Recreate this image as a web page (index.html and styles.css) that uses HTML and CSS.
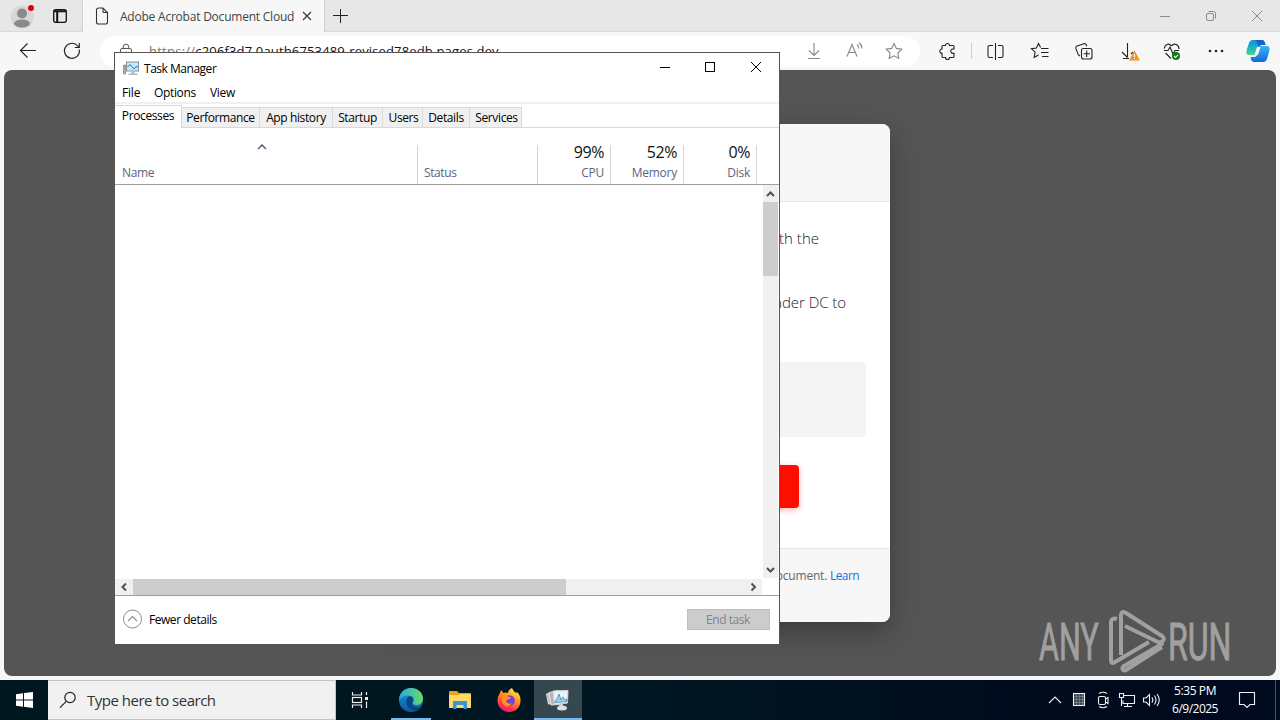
FILE: index.html
```html
<!DOCTYPE html>
<html lang="en">
<head>
  <meta charset="UTF-8" />
  <meta name="viewport" content="width=device-width, initial-scale=1.0" />
  <title>Desktop</title>
  <link rel="stylesheet" href="styles.css">
</head>
<body>

<div class="desktop">
  <!-- Browser -->
  <div class="browser">
    <div class="tabstrip">
      <svg class="profile" width="36" height="30" viewBox="0 0 36 30">
        <circle cx="18" cy="16" r="11.5" fill="#d9d7d5"/>
        <circle cx="18" cy="12.500" r="5" fill="#8c8a88"/>
        <ellipse cx="18" cy="22.500" rx="8" ry="4" fill="#8c8a88"/>
        <circle cx="27" cy="7" r="3" fill="#e1000f"/>
      </svg>
      <svg class="workspaces" width="16" height="16" viewBox="0 0 16 16" fill="none" stroke="#111">
        <rect x="1.700" y="1.700" width="12.600" height="12.600" rx="2" stroke-width="1.300"/>
        <path d="M2 3.200h12M5.200 4v10" stroke-width="2"/>
      </svg>
      <div class="tab">
        <svg width="14" height="18" viewBox="0 0 14 18" fill="none" stroke="#333" stroke-width="1.100">
          <path d="M1.500 3a2 2 0 0 1 2-2H8l4.500 4.500V15a2 2 0 0 1-2 2h-7a2 2 0 0 1-2-2zM8 1v3.500a1 1 0 0 0 1 1h3.500"/>
        </svg>
        <span class="tab-title">Adobe Acrobat Document Cloud</span>
        <svg width="10" height="10" viewBox="0 0 10 10" stroke="#333" stroke-width="1.100"><path d="M1 1l8 8M9 1l-8 8"/></svg>
      </div>
      <svg class="new-tab" width="15" height="14" viewBox="0 0 15 14" stroke="#222"><path d="M0 6.500h15M7.500 0v14"/></svg>
      <div class="win-buttons">
        <svg width="46" height="32" viewBox="0 0 46 32" stroke="#8a8a8a"><path d="M18 16.500h10"/></svg>
        <svg width="46" height="32" viewBox="0 0 46 32" stroke="#8a8a8a" fill="none"><rect x="18.500" y="13.500" width="7" height="7" rx="1.500"/><path d="M20.500 11.500h5a2 2 0 0 1 2 2v5"/></svg>
        <svg width="46" height="32" viewBox="0 0 46 32" stroke="#8a8a8a"><path d="M18 11l10 10M28 11l-10 10"/></svg>
      </div>
    </div>

    <div class="toolbar">
      <svg class="tool" viewBox="0 0 44 38"><path d="M30 18.500H15M21.500 11.500l-7 7 7 7"/></svg>
      <svg class="tool" viewBox="0 0 44 38"><path d="M29.300 17.500a7.500 7.500 0 1 1-2.200-4.100l2 1.800M29.300 11v4.500h-4.500"/></svg>
      <div class="address">
        <svg class="lock" width="14" height="16" viewBox="0 0 14 16" fill="none" stroke="#555"><rect x="1.500" y="5.500" width="11" height="9" rx="1.500"/><path d="M4.200 5.500V4a2.800 2.800 0 0 1 5.600 0v1.500M6.500 9h1"/></svg>
        <span class="url"><span class="scheme">https://</span>c206f3d7.0auth6753489-revised78edb.pages.dev</span>
        <svg class="pill-icon" viewBox="0 0 40 32"><path d="M20 8v12M15 15.500l5 5 5-5M14 23.500h12"/></svg>
        <svg class="pill-icon" viewBox="0 0 40 32"><path d="M13 21.500l5-12 5 12M14.700 17.500h6.600M23 9.500a5 5 0 0 1 1.500 4M25 7.500a8 8 0 0 1 3 6"/></svg>
        <svg class="pill-icon" viewBox="0 0 40 32"><path d="M20 8.500l2.400 4.900 5.400.8-3.900 3.800.9 5.300-4.800-2.500-4.800 2.500.9-5.300-3.900-3.800 5.400-.8z"/></svg>
      </div>
      <svg class="tool extensions" viewBox="0 0 44 38"><path d="M17 13.500h2.500a2 2 0 1 1 4 0H27a1 1 0 0 1 1 1V17h-1a2.200 2.200 0 1 0 0 4.400h1v3.100a1 1 0 0 1-1 1h-3.500a2 2 0 1 1-4 0H17a1 1 0 0 1-1-1v-3.100a2.200 2.200 0 1 1 0-4.400v-2.500a1 1 0 0 1 1-1z"/></svg>
      <div class="tool-sep"></div>
      <svg class="tool" viewBox="0 0 44 38"><path d="M19 13.500h-3.500a1.500 1.500 0 0 0-1.500 1.500v9a1.500 1.500 0 0 0 1.500 1.500H19M24 13.500h3.500a1.500 1.500 0 0 1 1.500 1.500v9a1.500 1.500 0 0 1-1.500 1.500H24M21.500 11v17"/></svg>
      <svg class="tool" viewBox="0 0 44 38"><path d="M22.600 15.500L20.500 11.500 18.400 16l-5 .7 3.700 3.500-.9 5.300 4.300-2.500M23 16.500h7.500M23 20.500h7.500M24 24.500h6.500"/></svg>
      <svg class="tool" viewBox="0 0 44 38"><rect x="19.500" y="16.500" width="10.500" height="10.500" rx="2"/><path d="M24.700 18.500v6.500M21.500 21.700h6.500M18 24l-1.600-1.100-2.600-6.500a2 2 0 0 1 1.200-2.400l7-2.300a2 2 0 0 1 2.300 1.100l.5 1.400"/></svg>
      <svg class="tool" viewBox="0 0 44 38"><path d="M21.500 11v14M16 20l5.500 5.500M27 20l-2 2M17 26.500h6"/><path d="M28.500 19.500l4.500 8.500H24z" fill="#f7941d" stroke="#f7941d"/><path d="M28.500 22v3m0 1v1" stroke="#fff"/></svg>
      <svg class="tool" viewBox="0 0 44 38"><path d="M21.500 14c-2.500-3.500-7-1.500-7 2.500M21.500 14c2.500-3.500 7.500-1.500 7.500 3M14 18.500h4l2-3.500 3 7 2-3.500h4M15.500 21l5.500 5.500"/><circle cx="26" cy="24" r="4" fill="#107c10" stroke="none"/><path d="M24 24l1.500 1.500 2.500-2.700" stroke="#fff"/></svg>
      <svg class="tool" viewBox="0 0 44 38"><g fill="#222" stroke="none"><circle cx="16" cy="19" r="1.300"/><circle cx="22" cy="19" r="1.300"/><circle cx="28" cy="19" r="1.300"/></g></svg>
      <svg class="copilot" width="26" height="24" viewBox="0 0 26 24">
        <defs>
          <linearGradient id="cpA" x1="0" y1="0" x2="0" y2="1"><stop offset="0" stop-color="#1487e8"/><stop offset=".45" stop-color="#12b5c4"/><stop offset="1" stop-color="#4fd18b"/></linearGradient>
          <linearGradient id="cpB" x1="0" y1="0" x2="0" y2="1"><stop offset="0" stop-color="#38b6f2"/><stop offset="1" stop-color="#1268dc"/></linearGradient>
        </defs>
        <path d="M8 1h9c2 0 3 2 3.500 5h-4c-2.500 0-3.500 2-4.500 6l-1 4H4c-3 0-3-3-2-6L4 4q1-3 4-3z" fill="url(#cpA)"/>
        <path d="M10 1h7c2 0 3 2 3.500 5h-4q-2 0-3 3-1-6-3.500-8z" fill="#1664c8"/>
        <path d="M18 23H9c-2 0-3-2-3.500-5h3.500c2.500 0 3.500-2 4.500-6l1.500-5h7c3 0 3 3 2 6l-2 7q-1 3-4 3z" fill="url(#cpB)"/>
        <path d="M12 8h3.500l-2.500 8H9.500z" fill="#f7f7f7"/>
      </svg>
    </div>

    <div class="page">
      <div class="card">
        <div class="card-head"></div>
        <div class="card-body">
          <p class="line-one">with the</p>
          <p class="line-two">Reader DC to</p>
          <div class="file-box"></div>
          <div class="red-btn"></div>
        </div>
        <div class="card-foot"><span>document.</span> <a>Learn</a></div>
      </div>
      <svg class="watermark" width="204" height="70" viewBox="0 0 204 70">
        <g font-family="Roboto, sans-serif" font-size="51" fill="#a9a9a9" stroke="#a9a9a9" stroke-width=".9">
          <text transform="translate(3 55) scale(.6 1)">ANY</text>
          <text transform="translate(132 55) scale(.63 1)">RUN</text>
        </g>
        <g transform="translate(1 4)" fill="none" stroke="#a9a9a9" stroke-width="4" stroke-linejoin="round">
          <path d="M80 10c-3-1-6 0-6 3v38c0 3 1 4 4 2l34-20"/>
          <path d="M84 46V7c0-4 2-5 5-3l36 23c3 2 2 5-1 6l-2 1"/>
          <path d="M88 17l37 18-38 22c-3 2-1 6 2 4l36-23"/>
        </g>
      </svg>
    </div>
  </div>

  <!-- Taskbar -->
  <div class="taskbar">
    <div class="start">
      <svg width="17" height="16" viewBox="0 0 17 16" fill="#fff"><path d="M0 2.300L7 1.300V7.500H0zM8 1.100L17 0v7.500H8zM0 8.500h7v6.200L0 13.700zM8 8.500h9V16L8 14.800z"/></svg>
    </div>
    <div class="search">
      <svg width="18" height="18" viewBox="0 0 18 18" fill="none" stroke="#222" stroke-width="1.200"><circle cx="11" cy="6.500" r="5.200"/><path d="M7.300 10.300L1 16.700"/></svg>
      <span>Type here to search</span>
    </div>
    <div class="task-view">
      <svg width="17" height="16" viewBox="0 0 17 16" fill="none" stroke="#eee" stroke-width="1.200"><path d="M1.500 0v3h9V0M1.500 16v-3h9v3M15.500 0v3M15.500 9.500V16"/><rect x="1.500" y="5.500" width="9" height="5"/><path d="M14 6.500h3" stroke-width="3"/></svg>
    </div>
    <div class="app running">
      <svg width="26" height="26" viewBox="0 0 26 26">
        <defs>
          <linearGradient id="edA" x1="0" y1="0" x2="1" y2="0"><stop offset="0" stop-color="#2aa8e8"/><stop offset="1" stop-color="#66dc62"/></linearGradient>
          <linearGradient id="edB" x1="0" y1="0" x2="0" y2="1"><stop offset="0" stop-color="#1b9de2"/><stop offset="1" stop-color="#0c59a4"/></linearGradient>
        </defs>
        <circle cx="13" cy="13" r="12" fill="url(#edB)"/>
        <path d="M1.200 11C2.500 4.500 7.500 1 13 1c8 0 12 6 12 10.500 0 4-3 6.500-6.500 6.500-4 0-4-2-3-3.200C17 12 15 8.500 10.500 8.500 6 8.500 2 10 1.200 14z" fill="url(#edA)"/>
        <path d="M10 10c-3 3-2.500 10 4 13 4 1.500 8-1 9.500-3.700-3 1.700-9 1-9.500-3-.2-1.500.7-2 1-3 .3-2.500-2-5.300-5-3.300z" fill="#10447f"/>
      </svg>
    </div>
    <div class="app">
      <svg width="22" height="20" viewBox="0 0 22 20"><path d="M0 2q0-1 1-1h7l2 2h11q1 0 1 1v14H0z" fill="#e8a317"/><path d="M0 5h9l2-1h11v14H0z" fill="#ffd867"/><path d="M4 19v-7q0-1 1-1h12q1 0 1 1v7h-3.500v-4h-7v4z" fill="#3a94cf"/></svg>
    </div>
    <div class="app">
      <svg width="24" height="24" viewBox="0 0 24 24">
        <defs><linearGradient id="fx" x1=".8" y1="0" x2=".3" y2="1"><stop offset="0" stop-color="#fff04a"/><stop offset=".4" stop-color="#ff9a1e"/><stop offset=".75" stop-color="#ff4047"/><stop offset="1" stop-color="#e9127b"/></linearGradient></defs>
        <path d="M3 5l1-3 2.500 3Q9 4 11 5q0-3 4-5 1 3 4 5l1-1q4 4 3.500 9.500C23 20 18 24 12 24S.500 19 .5 13Q.5 8 3 5z" fill="url(#fx)"/>
        <circle cx="12.500" cy="12.500" r="5.300" fill="#7540d6"/><path d="M5 8q4-2 7 1l2 .5q-1 2-3.500 2-2 1-.5 3 2 2 5 .5-2 4-6.500 3Q4 15 5 8z" fill="#ff9124"/>
      </svg>
    </div>
    <div class="app running active">
      <svg width="26" height="24" viewBox="0 0 26 24"><path d="M1.500 6l9-2v11l-7 1z" fill="#bdbdbd" stroke="#e5e5e5"/><path d="M4 4.500l10-2v14l-8 .5z" fill="#b5b5b5" stroke="#e5e5e5"/><path d="M8 3l15-.5-.5 12.500-13 1.500z" fill="#e8f2f7" stroke="#d4d4d4"/><path d="M10 13l2-2 2-5 2 6 2-3 2 3 2-1v2.500l-12 1z" fill="#9fd0ec" stroke="#3d8fc2" stroke-width=".8"/><path d="M14 16h4v3h-4z" fill="#c9c9c9"/><ellipse cx="17" cy="20" rx="5" ry="2.500" fill="#ddd"/></svg>
    </div>
    <div class="tray">
      <svg viewBox="0 0 24 40"><path d="M6 23l6-6 6 6"/></svg>
      <svg viewBox="0 0 24 40"><rect x="6.500" y="13.500" width="11" height="12" fill="#3b4550"/><path d="M9.500 14v11M12.500 14v11M15.500 14v11M7 16.500h10M7 19.500h10M7 22.500h10" stroke="#7d858c" stroke-width=".7"/></svg>
      <svg viewBox="0 0 24 40"><rect x="7.500" y="16.500" width="7" height="8" rx="1.500"/><path d="M14.500 19l2.500-1.500v6L14.500 22M8 13.500q4-2.500 8 0M8 26.500q4 2.500 8 0"/></svg>
      <svg viewBox="0 0 24 40"><path d="M9 15.500h10.500v8H8v-3M12.500 23.500v3M9 26.500h8M4.500 13.500h4v4h-4zM6.500 17.500v8.500"/></svg>
      <svg viewBox="0 0 24 40"><path d="M4.500 18h2.500l3.500-3.500v11L7 22H4.500zM13 17.500q1.700 2.500 0 5M15.500 15.500q3 4.500 0 9M18 14q4.500 6 0 12"/></svg>
      <div class="clock"><div>5:35 PM</div><div class="date">6/9/2025</div></div>
      <svg class="notify" viewBox="0 0 40 40"><path d="M12.500 12.500h15v12h-4.500l-3 3-3-3h-4.500z"/></svg>
      <div class="show-desktop"></div>
    </div>
  </div>

  <!-- Task Manager window -->
  <div class="taskmgr">
    <div class="tm-title">
      <svg width="16" height="16" viewBox="0 0 16 16"><path d="M.5 5h2v9h-2z" fill="#aaa" stroke="#777" stroke-width=".6"/><rect x="3.500" y="2" width="12" height="9" fill="#c5e9fa" stroke="#8a9299"/><path d="M4.500 7l2.500-2.500 4 4.500 2-2.500 2 .5" fill="none" stroke="#1877b8"/><path d="M8.500 11.500h3v2h-3zM5.500 13.500h9v1.500h-9z" fill="#b7b9bb"/></svg>
      <span class="tm-name">Task Manager</span>
      <svg width="46" height="30" viewBox="0 0 46 30" stroke="#000"><path d="M18 14.500h10"/></svg>
      <svg width="45" height="30" viewBox="0 0 45 30" stroke="#000" fill="none"><rect x="17.500" y="9.500" width="9" height="9"/></svg>
      <svg width="46" height="30" viewBox="0 0 46 30" stroke="#000"><path d="M18 9l10 10M28 9l-10 10"/></svg>
    </div>
    <div class="tm-menu"><span class="m-file">File</span><span class="m-options">Options</span><span class="m-view">View</span></div>
    <div class="tm-tabs">
      <div class="tm-tab selected">Processes</div>
      <div class="tm-tab t-perf">Performance</div>
      <div class="tm-tab t-hist">App history</div>
      <div class="tm-tab t-start">Startup</div>
      <div class="tm-tab t-users">Users</div>
      <div class="tm-tab t-details">Details</div>
      <div class="tm-tab t-serv">Services</div>
    </div>
    <div class="tm-head">
      <div class="col name"><svg width="10" height="6" viewBox="0 0 10 6" fill="none" stroke="#44546f" stroke-width="1.300"><path d="M1 5l4-4 4 4"/></svg><span>Name</span></div>
      <div class="col status"><span>Status</span></div>
      <div class="col num"><b>99%</b><span>CPU</span></div>
      <div class="col num"><b>52%</b><span>Memory</span></div>
      <div class="col num"><b>0%</b><span>Disk</span></div>
    </div>
    <div class="tm-list">
      <div class="v-scroll">
        <svg width="15" height="17" viewBox="0 0 15 17"><path d="M4 11l3.500-3.500L11 11"/></svg>
        <div class="v-thumb"></div>
        <svg class="end" width="15" height="17" viewBox="0 0 15 17"><path d="M4 7l3.500 3.500L11 7"/></svg>
      </div>
    </div>
    <div class="h-scroll">
      <svg width="18" height="16" viewBox="0 0 18 16"><path d="M11 4.500L7.500 8l3.500 3.500"/></svg>
      <div class="h-thumb"></div>
      <svg class="end" width="17" height="16" viewBox="0 0 17 16"><path d="M6.500 4.500L10 8l-3.500 3.500"/></svg>
    </div>
    <div class="tm-foot">
      <svg width="20" height="20" viewBox="0 0 20 20" fill="none" stroke="#8e8e8e"><circle cx="10.500" cy="10" r="9"/><path d="M6 12l4.500-4.500L15 12" stroke-width="1.200"/></svg>
      <span class="fewer">Fewer details</span>
      <div class="end-task">End task</div>
    </div>
  </div>
</div>

</body>
</html>
```
FILE: styles.css
```css
* { box-sizing: border-box; }
body { margin: 0; font-family: "Open Sans", "Noto Sans", sans-serif; font-size: 12px; color: #000; overflow: hidden; }
svg { display: block; flex: none; }
.desktop { position: relative; width: 1280px; height: 720px; overflow: hidden; display: flex; flex-direction: column; }

/* browser */
.browser { height: 680px; background: #f7f7f8; display: flex; flex-direction: column; }
.tabstrip { height: 32px; background: #e7e7e7; display: flex; align-items: center; border-bottom: 1px solid #dadada; }
.profile { margin-left: 4px; }
.workspaces { margin-left: 12px; }
.tab { width: 241px; height: 32px; margin-left: 15px; margin-bottom: -1px; padding: 0 12px 0 12px; background: #f7f7f7; display: flex; align-items: center; box-shadow: 0 0 2px #aaa; clip-path: inset(0 -3px 0 -3px); }
.tab-title { flex: 1; margin-left: 11px; font-size: 12px; letter-spacing: -0.22px; color: #444; white-space: nowrap; }
.new-tab { margin-left: 9px; }
.win-buttons { margin-left: auto; display: flex; }
.toolbar { height: 38px; padding-left: 6px; display: flex; align-items: center; }
.tool { width: 44px; height: 38px; fill: none; stroke: #222; stroke-width: 1.1; }
.tool-sep { width: 1px; height: 16px; margin: 0 2px 0 1px; background: #ccc; }
.extensions { margin-left: 6px; }
.copilot { margin-left: 7px; }
.address { width: 820px; height: 31px; margin-left: 6px; padding: 0 6px 0 19px; border-radius: 16px; background: #fff; display: flex; align-items: center; }
.url { flex: 1; margin-left: 16px; font-size: 13px; letter-spacing: 0.15px; color: #111; white-space: nowrap; }
.scheme { color: #777; letter-spacing: 0.25px; }
.pill-icon { width: 40px; height: 32px; fill: none; stroke: #888; stroke-width: 1.1; }
.page { position: relative; height: 606px; margin: 0 4px; background: #555; border-radius: 8px; display: flex; justify-content: center; align-items: flex-start; overflow: hidden; }

/* dialog on the page */
.card { width: 500px; height: 498px; margin-top: 54px; border-radius: 8px; background: #fff; overflow: hidden; box-shadow: 0 10px 30px rgba(0,0,0,0.3); display: flex; flex-direction: column; text-align: right; }
.card-head { height: 78px; background: #f7f7f7; border-bottom: 1px solid #e6e6e6; }
.card-body { flex: 1; padding: 24px 24px 0; }
.card-body p { margin: 0; font-size: 15px; line-height: 24px; color: #222; font-weight: 300; }
.card-body .line-one { padding-right: 47px; }
.card-body .line-two { padding-right: 20px; margin-top: 40px; letter-spacing: -0.05px; }
.file-box { height: 75px; margin-top: 48px; border-radius: 4px; background: #f4f4f4; }
.red-btn { width: 318px; height: 43px; margin: 28px auto 0; border-radius: 4px; background: #fa0f00; box-shadow: 0 2px 6px rgba(250,15,0,0.3); }
.card-foot { height: 74px; padding: 18px 31px 0 0; border-top: 1px solid #e6e6e6; background: #f7f7f7; font-size: 12px; line-height: 18px; letter-spacing: -0.2px; color: #666; }
.card-foot a { color: #1473e6; letter-spacing: -0.6px; }
.watermark { position: absolute; right: 36px; bottom: 1px; opacity: 0.9; }

/* taskbar */
.taskbar { height: 40px; background: linear-gradient(90deg, #00171f, #001722 48%, #000a1c 85%, #000a20); display: flex; }
.start { width: 48px; display: flex; align-items: center; justify-content: center; }
.search { width: 288px; padding-left: 11px; background: #f1f1f1; border: 1px solid #c5c5c5; border-left: 0; display: flex; align-items: center; gap: 10px; font-size: 15px; letter-spacing: -0.5px; color: #333; }
.task-view { width: 50px; padding-left: 15px; display: flex; align-items: center; }
.app { width: 49px; display: flex; align-items: center; justify-content: center; }
.running { background: linear-gradient(#76b9ed, #76b9ed) center bottom / 40px 2px no-repeat; }
.active { width: 48px; margin-left: 1px; background: linear-gradient(#76b9ed, #76b9ed) center bottom / 48px 2px no-repeat #35474f; }
.tray { margin-left: auto; display: flex; align-items: center; }
.tray svg { width: 24px; height: 40px; fill: none; stroke: #f0f0f0; stroke-width: 1.1; }
.tray .notify { width: 40px; }
.clock { width: 64px; color: #fff; text-align: center; line-height: 18px; letter-spacing: -0.4px; }
.date { letter-spacing: -0.5px; }
.show-desktop { width: 13px; height: 40px; background: linear-gradient(#4b5260, #4b5260) 8px 0 / 1px 40px no-repeat; }

/* task manager */
.taskmgr { position: absolute; left: 114px; top: 52px; width: 666px; height: 593px; background: #fff; border: 1px solid #555; display: flex; flex-direction: column; }
.tm-title { height: 30px; padding-left: 8px; display: flex; align-items: center; }
.tm-name { flex: 1; margin-left: 5px; letter-spacing: -0.48px; }
.tm-menu { height: 21px; padding-left: 7px; border-bottom: 2px solid #f0f0f0; display: flex; line-height: 20px; }
.m-file { width: 32px; letter-spacing: -0.2px; }
.m-options { width: 56px; letter-spacing: -0.35px; }
.m-view { letter-spacing: -0.3px; }
.tm-tabs { height: 24px; border-bottom: 1px solid #d9d9d9; display: flex; align-items: flex-end; }
.tm-tab { height: 20px; background: #f0f0f0; border: 1px solid #d9d9d9; border-left: 0; border-bottom: 0; text-align: center; line-height: 20px; letter-spacing: -0.38px; white-space: nowrap; }
.tm-tab.selected { width: 67px; height: 23px; margin-bottom: -1px; background: #fff; line-height: 20px; }
.t-perf { width: 78px; }
.t-hist { width: 73px; }
.t-start { width: 50px; }
.t-users { width: 40px; }
.t-details { width: 47px; }
.t-serv { width: 52px; }
.tm-tab.t-serv, .tm-tab.t-users { padding-left: 2px; }
.tm-head { height: 57px; padding-top: 17px; border-bottom: 1px solid #a0a0a0; display: flex; }
.col { padding: 0 6px 2px 6px; border-right: 1px solid #d5d5d5; display: flex; flex-direction: column; justify-content: flex-end; color: #5a6580; line-height: 18px; letter-spacing: -0.4px; }
.name { width: 303px; padding-left: 7px; letter-spacing: -0.35px; }
.name svg { margin: 0 0 14px 135px; }
.status { width: 120px; }
.num { width: 73px; text-align: right; letter-spacing: -0.25px; }
.num b { font-size: 16px; font-weight: 400; line-height: 20px; color: #111; letter-spacing: -0.4px; margin-bottom: 2px; }
.tm-list { height: 393px; display: flex; justify-content: flex-end; }
.v-scroll { width: 15px; margin-right: 1px; background: #f0f0f0; display: flex; flex-direction: column; }
.v-thumb { height: 74px; background: #cdcdcd; }
.v-scroll svg, .h-scroll svg { fill: none; stroke: #505050; stroke-width: 2; }
.v-scroll .end { margin-top: auto; }
.h-scroll { width: 647px; height: 16px; margin-top: 1px; background: #f0f0f0; display: flex; }
.h-thumb { width: 433px; background: #cdcdcd; }
.h-scroll .end { margin-left: auto; }
.tm-foot { flex: 1; padding: 0 9px 2px 7px; border-top: 1px solid #a0a0a0; display: flex; align-items: center; }
.fewer { margin-left: 7px; letter-spacing: -0.46px; }
.end-task { width: 83px; height: 21px; margin-left: auto; padding-right: 1px; background: #ccc; border: 1px solid #bfbfbf; color: #838390; text-align: center; line-height: 20px; letter-spacing: -0.45px; }
```
